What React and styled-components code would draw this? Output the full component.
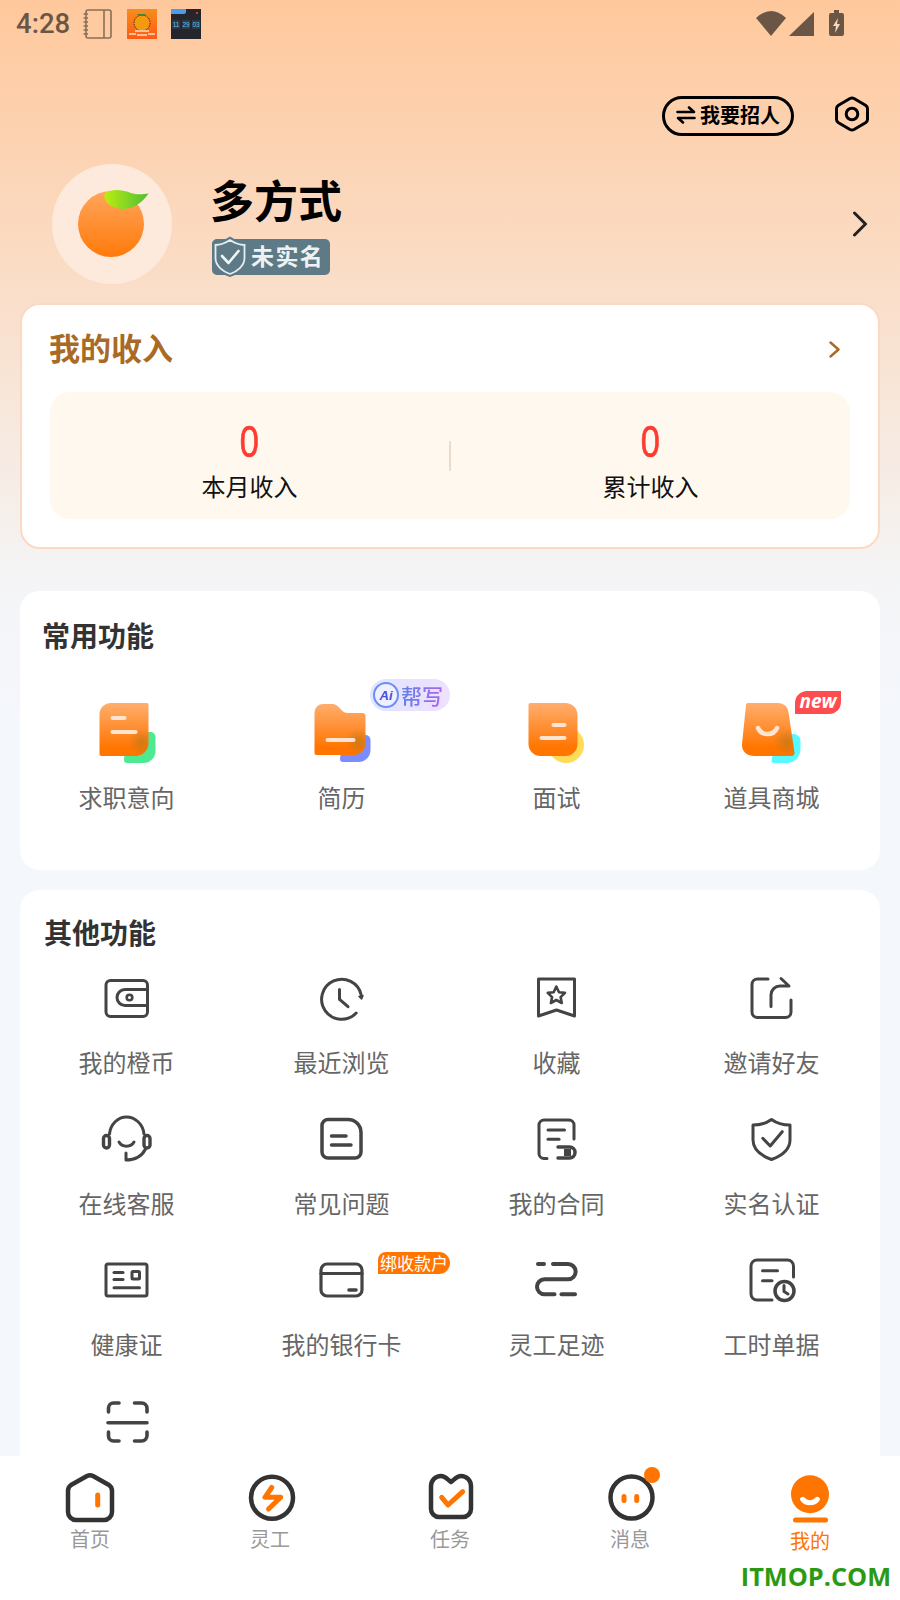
import React from "react";
import styled, { createGlobalStyle } from "styled-components";

const CJK = `"Noto Sans CJK SC", "Noto Sans", sans-serif`;
const ORANGE = "#ff7500";

const Global = createGlobalStyle`
  html, body { margin: 0; padding: 0; background: #fff; }
  body { font-family: ${CJK}; }
  * { box-sizing: border-box; }
`;

const Page = styled.div`
  position: relative;
  width: 900px;
  height: 1600px;
  display: flex;
  flex-direction: column;
  overflow: hidden;
  background: #fff;
`;
const Scroll = styled.main`
  height: 1456px;
  overflow: hidden;
  background: linear-gradient(180deg, #ffc89c 0, #f4f5f7 590px, #f4f7fc 720px);
`;
const StatusBar = styled.div`
  height: 48px;
  display: flex;
  align-items: flex-start;
  padding: 9px 56px 0 16px;
`;
const Clock = styled.span`
  font: 500 27.5px/30px Roboto, sans-serif;
  color: #6b5645;
  margin-right: 13px;
`;
const AppGlyph = styled.svg`
  display: block;
  width: 30px;
  height: 30px;
  margin-right: 14px;
`;
const Signals = styled.svg`
  display: block;
  width: 88px;
  height: 30px;
  margin-left: auto;
`;
const TopActions = styled.div`
  display: flex;
  justify-content: flex-end;
  align-items: flex-start;
  gap: 41px;
  margin-top: 48px;
  padding-right: 31px;
  height: 40px;
`;
const RecruitButton = styled.button`
  width: 132px;
  height: 40px;
  padding: 0 0 2px 11px;
  display: flex;
  align-items: center;
  gap: 4px;
  border: 3.5px solid #000;
  border-radius: 20px;
  background: transparent;
  color: #000;
  font: 700 20px/28px ${CJK};
`;
const Profile = styled.section`
  display: flex;
  align-items: flex-start;
  margin-top: 28px;
  padding: 0 32px 0 52px;
  height: 120px;
`;
const Avatar = styled.div`
  width: 120px;
  height: 120px;
  border-radius: 50%;
  background: #fdeadc;
`;
const NameColumn = styled.div`
  margin-left: 40px;
  padding-top: 9px;
  flex: 1;
`;
const Name = styled.div`
  margin-left: -2px;
  font: 700 44px/52px ${CJK};
  color: #000;
`;
const Badge = styled.div`
  position: relative;
  display: flex;
  align-items: center;
  width: 118px;
  height: 36px;
  margin-top: 14px;
  padding: 0 0 4px 39px;
  background: #5d7a86;
  border-radius: 5px;
  color: #eef2f3;
  font: 700 23px/32px ${CJK};
  letter-spacing: 1.4px;
  white-space: nowrap;
`;
const BadgeShield = styled.svg`
  position: absolute;
  left: 0;
  top: -3px;
  width: 36px;
  height: 41px;
`;
const ProfileArrow = styled.svg`
  align-self: center;
  width: 16px;
  height: 26px;
`;
const IncomeCard = styled.section`
  margin: 19px 20px 0;
  height: 246px;
  padding: 0 28px;
  background: #fff;
  border: 2px solid #fdd9c3;
  border-radius: 20px;
`;
const IncomeHead = styled.div`
  height: 87px;
  display: flex;
  align-items: center;
  justify-content: space-between;
  padding: 2px 10px 0 0;
`;
const IncomeTitle = styled.h2`
  margin: -6px 0 0 -1px;
  font: 700 31px/40px ${CJK};
  color: #a96a25;
`;
const IncomePanel = styled.div`
  height: 127px;
  display: flex;
  align-items: center;
  background: #fff8ef;
  border-radius: 20px;
`;
const Stat = styled.div`
  flex: 1;
  display: flex;
  flex-direction: column;
  align-items: center;
  margin-top: 14px;
`;
const StatValue = styled.span`
  display: inline-block;
  transform: scaleX(0.78);
  font: 400 44px/46px "Liberation Sans", sans-serif;
  -webkit-text-stroke: 0.7px #ff3b30;
  color: #ff3b30;
  margin-top: -4px;
`;
const StatLabel = styled.span`
  font: 400 24px/34px ${CJK};
  color: #111;
  margin-top: 4px;
`;
const Divider = styled.div`
  width: 2px;
  height: 30px;
  background: #eadccd;
`;
const Card = styled.section`
  margin: ${(p) => p.$top}px 20px 0;
  background: #fff;
  border-radius: 20px;
  padding: ${(p) => p.$padTop}px 0 ${(p) => p.$padBottom}px;
`;
const CardTitle = styled.h2`
  margin: 0;
  padding-left: ${(p) => p.$left}px;
  font: 700 28px/40px ${CJK};
  color: #333;
`;
const Grid = styled.div`
  display: grid;
  grid-template-columns: repeat(4, 1fr);
  margin-top: ${(p) => p.$top}px;
  row-gap: 36px;
`;
const Item = styled.div`
  display: flex;
  flex-direction: column;
  align-items: center;
`;
const IconBox = styled.div`
  position: relative;
  width: ${(p) => p.$size}px;
  height: ${(p) => p.$size}px;
  margin-right: ${(p) => p.$nudge || 0}px;
`;
const ItemLabel = styled.span`
  margin: ${(p) => p.$gap}px 2px 0 0;
  font: 400 24px/34px ${CJK};
  color: #666;
  white-space: nowrap;
`;
const AiTag = styled.div`
  position: absolute;
  left: 57.5px;
  top: -24px;
  width: 80px;
  height: 32px;
  display: flex;
  align-items: center;
  gap: 2px;
  padding-left: 3px;
  border-radius: 16px;
  background: linear-gradient(90deg, #dfe6ff, #efe0ff);
`;
const AiMark = styled.span`
  width: 26px;
  height: 26px;
  display: flex;
  align-items: center;
  justify-content: center;
  border-radius: 50%;
  border: 2px solid #6f8cf5;
  background: #eef0ff;
  font: italic 700 13px/1 "Liberation Sans", sans-serif;
  color: #4552d8;
`;
const AiText = styled.span`
  font: 500 21px/28px ${CJK};
  background: linear-gradient(90deg, #5f82ea, #a765f2);
  -webkit-background-clip: text;
  background-clip: text;
  color: transparent;
`;
const NewTag = styled.div`
  position: absolute;
  left: 52.5px;
  top: -12px;
  width: 46px;
  height: 23px;
  text-align: center;
  background: #ff4d4f;
  border-radius: 12px 0 12px 0;
  color: #fff;
  font: italic 700 19px/21px "Open Sans", sans-serif;
`;
const BindTag = styled.div`
  position: absolute;
  left: 60.5px;
  top: -4px;
  width: 72px;
  height: 22px;
  text-align: center;
  background: ${ORANGE};
  border-radius: 8px 11px 11px 0;
  color: #fff;
  font: 400 17px/22px ${CJK};
  white-space: nowrap;
`;
const Svg = styled.svg`
  display: block;
  overflow: visible;
  fill: none;
  stroke: ${(p) => p.$stroke || "#444"};
  stroke-width: ${(p) => p.$sw || 3};
  stroke-linecap: round;
  stroke-linejoin: round;
`;
const TabBar = styled.nav`
  height: 144px;
  display: grid;
  grid-template-columns: repeat(5, 180px);
  padding-top: 14px;
  background: #fff;
`;
const Tab = styled.div`
  display: flex;
  flex-direction: column;
  align-items: center;
`;
const TabLabel = styled.span`
  margin-top: ${(p) => (p.$active ? 2 : 0)}px;
  font: 400 20px/26px ${CJK};
  color: ${(p) => (p.$active ? ORANGE : "#999")};
`;
const Watermark = styled.div`
  position: absolute;
  right: 9px;
  bottom: 6px;
  font: 700 25.3px/36px "Open Sans", sans-serif;
  color: #2a9a12;
`;

const Line = ({ children, size = 48, sw }) => (
  <Svg width={size} height={size} viewBox={`0 0 ${size} ${size}`} $sw={sw}>
    {children}
  </Svg>
);

const Defs = ({ id }) => (
  <defs>
    <linearGradient id={id} x1="0" y1="0" x2="0" y2="1">
      <stop offset="0" stopColor="#ffae6e" />
      <stop offset="0.85" stopColor="#ff7500" />
    </linearGradient>
    <radialGradient id={id + "s"} cx="0.86" cy="0.74" r="0.26">
      <stop offset="0" stopColor="#b8781a" stopOpacity="0.65" />
      <stop offset="1" stopColor="#b8781a" stopOpacity="0" />
    </radialGradient>
  </defs>
);

const Duo = ({ id, back, shape, marks, plain, dx = 0 }) => (
  <svg width="60" height="60" viewBox={`${-dx} 0 60 60`} style={{ display: "block", overflow: "visible" }}>
    <Defs id={id} />
    {back}
    <path d={shape} fill={`url(#${id})`} />
    {!plain && <path d={shape} fill={`url(#${id}s)`} />}
    <g fill="none" stroke="#ffe4d2" strokeWidth="4" strokeLinecap="round">
      {marks}
    </g>
  </svg>
);

const IntentIcon = () => (
  <Duo
    id="g1"
    back={<path d="M28 29H52a5 5 0 0 1 5.5 5V48a12 12 0 0 1-12 12H29a3 3 0 0 1-3-3Z" fill="#4eea92" />}
    shape="M13 0H49a1.5 1.5 0 0 1 1.5 1.5V40a13 13 0 0 1-13 13H3.5a2 2 0 0 1-2-2V11.5A11.5 11.5 0 0 1 13 0Z"
    marks={<><path d="M14.5 15H26.5" /><path d="M14.5 29H37.5" /></>}
  />
);
const ResumeIcon = () => (
  <Duo
    id="g2"
    back={<path d="M30 32H52a5 5 0 0 1 5.5 5V47a12 12 0 0 1-12 12H30a3 3 0 0 1-3-3Z" fill="#7b8cff" />}
    shape="M10 1H18C23 1 25 3 28 6.5C30 9 32 10 35 10H49.5a3 3 0 0 1 3 3V40a12 12 0 0 1-12 12H3.5a2 2 0 0 1-2-2V9.5A8.5 8.5 0 0 1 10 1Z"
    marks={<path d="M14.5 37H40.5" />}
  />
);
const InterviewIcon = () => (
  <Duo
    id="g3"
    plain
    dx={-1}
    back={<circle cx="39" cy="42" r="18" fill="#ffdb58" />}
    shape="M3.5 0H38.5a12 12 0 0 1 12 12V41a12 12 0 0 1-12 12H13.5a12 12 0 0 1-12-12V2a2 2 0 0 1 2-2Z"
    marks={<><path d="M26.5 22H37.5" /><path d="M14.5 35H37.5" /></>}
  />
);
const ShopIcon = () => (
  <Duo
    id="g4"
    dx={-1.5}
    back={<path d="M35 31H52a7 7 0 0 1 7 7V46a14 14 0 0 1-14 14H32a2 2 0 0 1-2-2Z" fill="#55f9ff" />}
    shape="M6 0H37a10 10 0 0 1 10 9L53 50a3 3 0 0 1-3 3H13C5 53 0 48 0.5 41L4.5 2a2 2 0 0 1 1.5-2Z"
    marks={<path d="M16.5 25C20 33 32 33 35.5 25" strokeWidth="4.5" />}
  />
);

const Wallet = () => (
  <Line>
    <rect x="3" y="6.5" width="41.5" height="36" rx="4.5" />
    <path d="M44 15.5H22a8 8 0 0 0 0 16H44" />
    <circle cx="26.5" cy="23.5" r="2.8" strokeWidth="2.6" />
  </Line>
);
const History = () => (
  <Line>
    <path d="M38.2 39A20 20 0 1 1 43.2 21" />
    <path d="M21.5 15.5V25.3L30 32.7" />
    <path d="M41 22.5L43.6 25L45 21.8Z" fill="#444" strokeWidth="1.5" />
  </Line>
);
const BookmarkStar = () => (
  <Line>
    <path d="M5.5 5H41.5V42L23.5 36L5.5 42Z" />
    <path d="M23.3 12.5L26 18.2L32 18.9L27.6 23.1L28.8 29L23.3 26L17.9 29L19.1 23.1L14.7 18.9L20.7 18.2Z" strokeWidth="2.6" />
  </Line>
);
const ShareBox = () => (
  <Line>
    <path d="M20 5H9.5a5.5 5.5 0 0 0-5.5 5.5V38a5.5 5.5 0 0 0 5.5 5.5H37.5a5.5 5.5 0 0 0 5.5-5.5V26" />
    <path d="M23 32.5V21a9 9 0 0 1 9-9H41L33 4.5" />
  </Line>
);
const Headset = () => (
  <Line>
    <path d="M6.5 19C7.5 9 15 2 23.5 2S40 9 41 19" />
    <rect x="0.5" y="20.5" width="6" height="12.5" rx="3" strokeWidth="3.4" />
    <rect x="41" y="20.5" width="6" height="12.5" rx="3" strokeWidth="3.4" />
    <path d="M16 27C19 32.5 28 32.5 31 27" />
    <path d="M42.5 34C39 41 32 45 23 45V38" />
  </Line>
);
const FaqDoc = () => (
  <Line sw="3.5">
    <path d="M10 4.5H30A13 13 0 0 1 43 17.500V37a6 6 0 0 1-6 6H10a6 6 0 0 1-6-6V10.500a6 6 0 0 1 6-6Z" />
    <path d="M13.500 21H28" />
    <path d="M13.500 30H33" />
  </Line>
);
const Contract = () => (
  <Line>
    <path d="M14 43.500H11a5 5 0 0 1-5-5V10a5 5 0 0 1 5-5H36a5 5 0 0 1 5 5V24" />
    <path d="M15 15H31.500" />
    <path d="M15 24.300H26" />
    <path d="M25 32H36.500a5.500 5.500 0 0 1 0 11H25" strokeWidth="3.5" />
    <path d="M31 34V41H38V34Z" fill="#444" stroke="none" />
  </Line>
);
const Shield = () => (
  <Line>
    <path d="M23.500 4.500C29 8.500 36 10 42 10V25C42 35 33 41 23.500 44.500C14 41 5 35 5 25V10C11 10 18 8.500 23.500 4.500Z" />
    <path d="M14.800 23.300L22.200 31L34.200 16.700" />
  </Line>
);
const HealthCard = () => (
  <Line>
    <rect x="3" y="8" width="41" height="32" rx="2" />
    <path d="M11 16.500H20" />
    <path d="M11 23.500H20" />
    <rect x="29" y="15.500" width="7.500" height="7.500" rx="1" />
    <path d="M11 31.700H36.500" />
  </Line>
);
const BankCard = () => (
  <Line sw="3.2">
    <rect x="3" y="8" width="41" height="32" rx="6" />
    <path d="M3 17.500H44" />
    <path d="M31 34H38" strokeWidth="3.6" />
  </Line>
);
const Footprint = () => (
  <Line sw="4">
    <path d="M5 8H11" />
    <path d="M20 8H35a7.600 7.600 0 0 1 0 15.300H11.500a7.500 7.500 0 0 0 0 15H21.500" />
    <path d="M28.500 38.300H42" />
  </Line>
);
const Timesheet = () => (
  <Line>
    <path d="M24 44H9a6 6 0 0 1-6-6V10a6 6 0 0 1 6-6H39.500a6 6 0 0 1 6 6V21" />
    <path d="M14.500 14.700H29.500" />
    <path d="M14.500 24.700H24" />
    <circle cx="36.500" cy="35" r="9.500" strokeWidth="3.500" />
    <path d="M36 29.500V35.500L40 38" />
  </Line>
);
const Scan = () => (
  <Line sw="3.6">
    <path d="M5.500 15V11a5 5 0 0 1 5-5H16" />
    <path d="M31.500 6H38.500a5.500 5.500 0 0 1 5.500 5.500V15" />
    <path d="M5 25.700H44" />
    <path d="M5.500 35V39a5 5 0 0 0 5 5H16" />
    <path d="M31.500 44H38.500a5.500 5.500 0 0 0 5.500-5.500V35" />
  </Line>
);

const TabSvg = ({ children }) => (
  <Svg width="60" height="56" viewBox="0 0 60 56" $stroke="#333" $sw="4.5">
    {children}
  </Svg>
);
const OrangeStroke = ({ d }) => <path d={d} stroke={ORANGE} strokeWidth="5" />;

const tabs = [
  {
    label: "首页",
    icon: (
      <TabSvg>
        <path d="M27 6Q30 4.500 33 6L49 15Q52 17 52 21V42a8 8 0 0 1-8 8H16a8 8 0 0 1-8-8V21Q8 17 11 15Z" />
        <OrangeStroke d="M37.700 25V35" />
      </TabSvg>
    ),
  },
  {
    label: "灵工",
    icon: (
      <TabSvg>
        <circle cx="32" cy="27.700" r="21" />
        <OrangeStroke d="M31.700 17.500L25 27.300H40.700L28.500 39" />
      </TabSvg>
    ),
  },
  {
    label: "任务",
    icon: (
      <TabSvg>
        <path d="M11 20V16a10 10 0 0 1 10-10C25 6 27 9 31 12C35 9 37 6 41 6a10 10 0 0 1 10 10V39a8 8 0 0 1-8 8H19a8 8 0 0 1-8-8Z" />
        <OrangeStroke d="M21.700 27.300L28 35L42.700 21.700" />
      </TabSvg>
    ),
  },
  {
    label: "消息",
    icon: (
      <TabSvg>
        <circle cx="31.500" cy="27.500" r="21" />
        <OrangeStroke d="M24 26.500V30.500" />
        <OrangeStroke d="M36.700 26.500V30.500" />
        <circle cx="52" cy="5" r="8" fill={ORANGE} stroke="none" />
      </TabSvg>
    ),
  },
  {
    label: "我的",
    active: true,
    icon: (
      <TabSvg>
        <circle cx="30" cy="24.300" r="19" fill={ORANGE} stroke="none" />
        <path d="M22.700 29.300C26 34 34 34 37.300 29.300" stroke="#fff" strokeWidth="5" />
        <OrangeStroke d="M15.500 50H45.500" />
      </TabSvg>
    ),
  },
];

const common = [
  { label: "求职意向", icon: <IntentIcon /> },
  { label: "简历", icon: <ResumeIcon />, tag: (
    <AiTag>
      <AiMark>Ai</AiMark>
      <AiText>帮写</AiText>
    </AiTag>
  ) },
  { label: "面试", icon: <InterviewIcon /> },
  { label: "道具商城", icon: <ShopIcon />, tag: <NewTag>new</NewTag> },
];

const others = [
  { label: "我的橙币", icon: <Wallet /> },
  { label: "最近浏览", icon: <History /> },
  { label: "收藏", icon: <BookmarkStar /> },
  { label: "邀请好友", icon: <ShareBox /> },
  { label: "在线客服", icon: <Headset /> },
  { label: "常见问题", icon: <FaqDoc /> },
  { label: "我的合同", icon: <Contract /> },
  { label: "实名认证", icon: <Shield /> },
  { label: "健康证", icon: <HealthCard /> },
  { label: "我的银行卡", icon: <BankCard />, tag: <BindTag>绑收款户</BindTag> },
  { label: "灵工足迹", icon: <Footprint /> },
  { label: "工时单据", icon: <Timesheet /> },
  { icon: <Scan /> },
];

export default function App() {
  return (
    <Page>
      <Global />
      <Scroll>
        <StatusBar>
          <Clock>4:28</Clock>
          <AppGlyph viewBox="0 0 30 30">
            <g fill="none" stroke="#8a6f58" strokeWidth="1.6">
              <rect x="3" y="1" width="25" height="28" rx="2" />
              <path d="M21 1V29" />
              <path d="M0.500 5H5M0.500 9H5M0.500 13H5M0.500 17H5M0.500 21H5M0.500 25H5" />
            </g>
          </AppGlyph>
          <AppGlyph viewBox="0 0 30 30">
            <defs>
              <linearGradient id="tile" x1="0" y1="0" x2="0" y2="1">
                <stop offset="0" stopColor="#f78d1e" />
                <stop offset="1" stopColor="#ff5a14" />
              </linearGradient>
            </defs>
            <rect width="30" height="30" fill="url(#tile)" />
            <circle cx="15" cy="14" r="8" fill="#f59a10" stroke="#3a2a10" strokeWidth="1" strokeDasharray="1.500 1" />
            <path d="M10 5H19L17 7H12Z" fill="#3f8a3a" />
            <path d="M8 22H22M2 25H9M21 25H28M10 26H20" stroke="#ffe0c0" strokeWidth="1.500" />
          </AppGlyph>
          <AppGlyph viewBox="0 0 30 30">
            <rect width="30" height="30" fill="#24262b" />
            <path d="M0 0H15V3Q15 5 13 5H0Z" fill="#4a9bea" />
            <rect x="25" y="3" width="2" height="2" fill="#e03030" />
            <path d="M1 11H9V20H1ZM11 11H19V20H11ZM21 11H29V20H21Z" fill="#33373e" />
            <g fontSize="6.500" fontFamily="Liberation Sans" fill="#52c6f2" textAnchor="middle">
              <text x="5" y="18">11</text>
              <text x="15" y="18">29</text>
              <text x="25" y="18">03</text>
            </g>
          </AppGlyph>
          <Signals viewBox="0 0 88 30">
            <g fill="#6b5645">
              <path d="M0 9Q15 -5 30 9L15 27Z" />
              <path d="M58 3V27H33Z" />
              <path d="M78 1H83V4H86a2 2 0 0 1 2 2V25a2 2 0 0 1-2 2H75a2 2 0 0 1-2-2V6a2 2 0 0 1 2-2H78Z" />
            </g>
            <path d="M82 9L77 17H80L79 24L84 15H81Z" fill="#fbd8b8" />
          </Signals>
        </StatusBar>

        <TopActions>
          <RecruitButton>
            <svg width="20" height="18" viewBox="0 0 20 18" fill="none" stroke="#000" strokeWidth="2.600" strokeLinecap="round" strokeLinejoin="round">
              <path d="M1.500 6H18L13 1.500" />
              <path d="M18.500 12H2L7 16.500" />
            </svg>
            我要招人
          </RecruitButton>
          <svg width="34" height="36" viewBox="0 0 34 36" fill="none" stroke="#000" strokeWidth="3" strokeLinejoin="round">
            <path d="M15 2.500Q17 1.500 19 2.500L30.500 9.200Q32.500 10.500 32.500 12.500V23.500Q32.500 25.500 30.500 26.800L19 33.500Q17 34.500 15 33.500L3.500 26.800Q1.500 25.500 1.500 23.500V12.500Q1.500 10.500 3.500 9.200Z" />
            <circle cx="17" cy="18" r="5.800" />
          </svg>
        </TopActions>

        <Profile>
          <Avatar>
            <svg width="120" height="120" viewBox="0 0 120 120">
              <defs>
                <linearGradient id="fruit" x1="0" y1="0" x2="0" y2="1">
                  <stop offset="0" stopColor="#ffa55c" />
                  <stop offset="1" stopColor="#ff7a0a" />
                </linearGradient>
                <linearGradient id="leaf" x1="0" y1="0" x2="1" y2="0">
                  <stop offset="0" stopColor="#bcec10" />
                  <stop offset="1" stopColor="#4fbf34" />
                </linearGradient>
              </defs>
              <circle cx="59" cy="60" r="33" fill="url(#fruit)" />
              <path d="M53 29C60 24 72 26 79 29C85 31 92 30 96.500 29.500C92 36 85 44 72 45C60 45 50 38 53 29Z" fill="url(#leaf)" />
            </svg>
          </Avatar>
          <NameColumn>
            <Name>多方式</Name>
            <Badge>
              <BadgeShield viewBox="0 0 36 41">
                <path d="M18 0.500C23 4 29 6 35.500 6V22C35.500 32 27 38 18 41C9 38 0.500 32 0.500 22V6C7 6 13 4 18 0.500Z" fill="#5d7a86" />
                <path d="M18 4C22.500 7 27 9 32.500 9V22C32.500 30 25 35.500 18 38C11 35.500 3.500 30 3.500 22V9C9 9 13.500 7 18 4Z" fill="none" stroke="#e6eef0" strokeWidth="1.800" />
                <path d="M10 20L16.500 27L26.500 15" fill="none" stroke="#f0f5f6" strokeWidth="2.600" strokeLinecap="round" strokeLinejoin="round" />
              </BadgeShield>
              未实名
            </Badge>
          </NameColumn>
          <ProfileArrow viewBox="0 0 16 26" fill="none" stroke="#222" strokeWidth="3" strokeLinecap="round" strokeLinejoin="round">
            <path d="M2.500 2L13.500 13L2.500 24" />
          </ProfileArrow>
        </Profile>

        <IncomeCard>
          <IncomeHead>
            <IncomeTitle>我的收入</IncomeTitle>
            <svg width="11" height="17" viewBox="0 0 11 17" fill="none" stroke="#a96a25" strokeWidth="2.400" strokeLinecap="round" strokeLinejoin="round">
              <path d="M1.500 1.500L9.500 8.500L1.500 15.500" />
            </svg>
          </IncomeHead>
          <IncomePanel>
            <Stat>
              <StatValue>0</StatValue>
              <StatLabel>本月收入</StatLabel>
            </Stat>
            <Divider />
            <Stat>
              <StatValue>0</StatValue>
              <StatLabel>累计收入</StatLabel>
            </Stat>
          </IncomePanel>
        </IncomeCard>

        <Card $top={42} $padTop={24} $padBottom={56}>
          <CardTitle $left={22}>常用功能</CardTitle>
          <Grid $top={48}>
            {common.map((it) => (
              <Item key={it.label}>
                <IconBox $size={60}>
                  {it.icon}
                  {it.tag}
                </IconBox>
                <ItemLabel $gap={17}>{it.label}</ItemLabel>
              </Item>
            ))}
          </Grid>
        </Card>

        <Card $top={20} $padTop={22} $padBottom={40}>
          <CardTitle $left={24}>其他功能</CardTitle>
          <Grid $top={22}>
            {others.map((it, i) => (
              <Item key={i}>
                <IconBox $size={48} $nudge={2}>
                  {it.icon}
                  {it.tag}
                </IconBox>
                {it.label && <ItemLabel $gap={23}>{it.label}</ItemLabel>}
              </Item>
            ))}
          </Grid>
        </Card>
      </Scroll>

      <TabBar>
        {tabs.map((t) => (
          <Tab key={t.label}>
            {t.icon}
            <TabLabel $active={t.active}>{t.label}</TabLabel>
          </Tab>
        ))}
      </TabBar>
      <Watermark>ITMOP.COM</Watermark>
    </Page>
  );
}
